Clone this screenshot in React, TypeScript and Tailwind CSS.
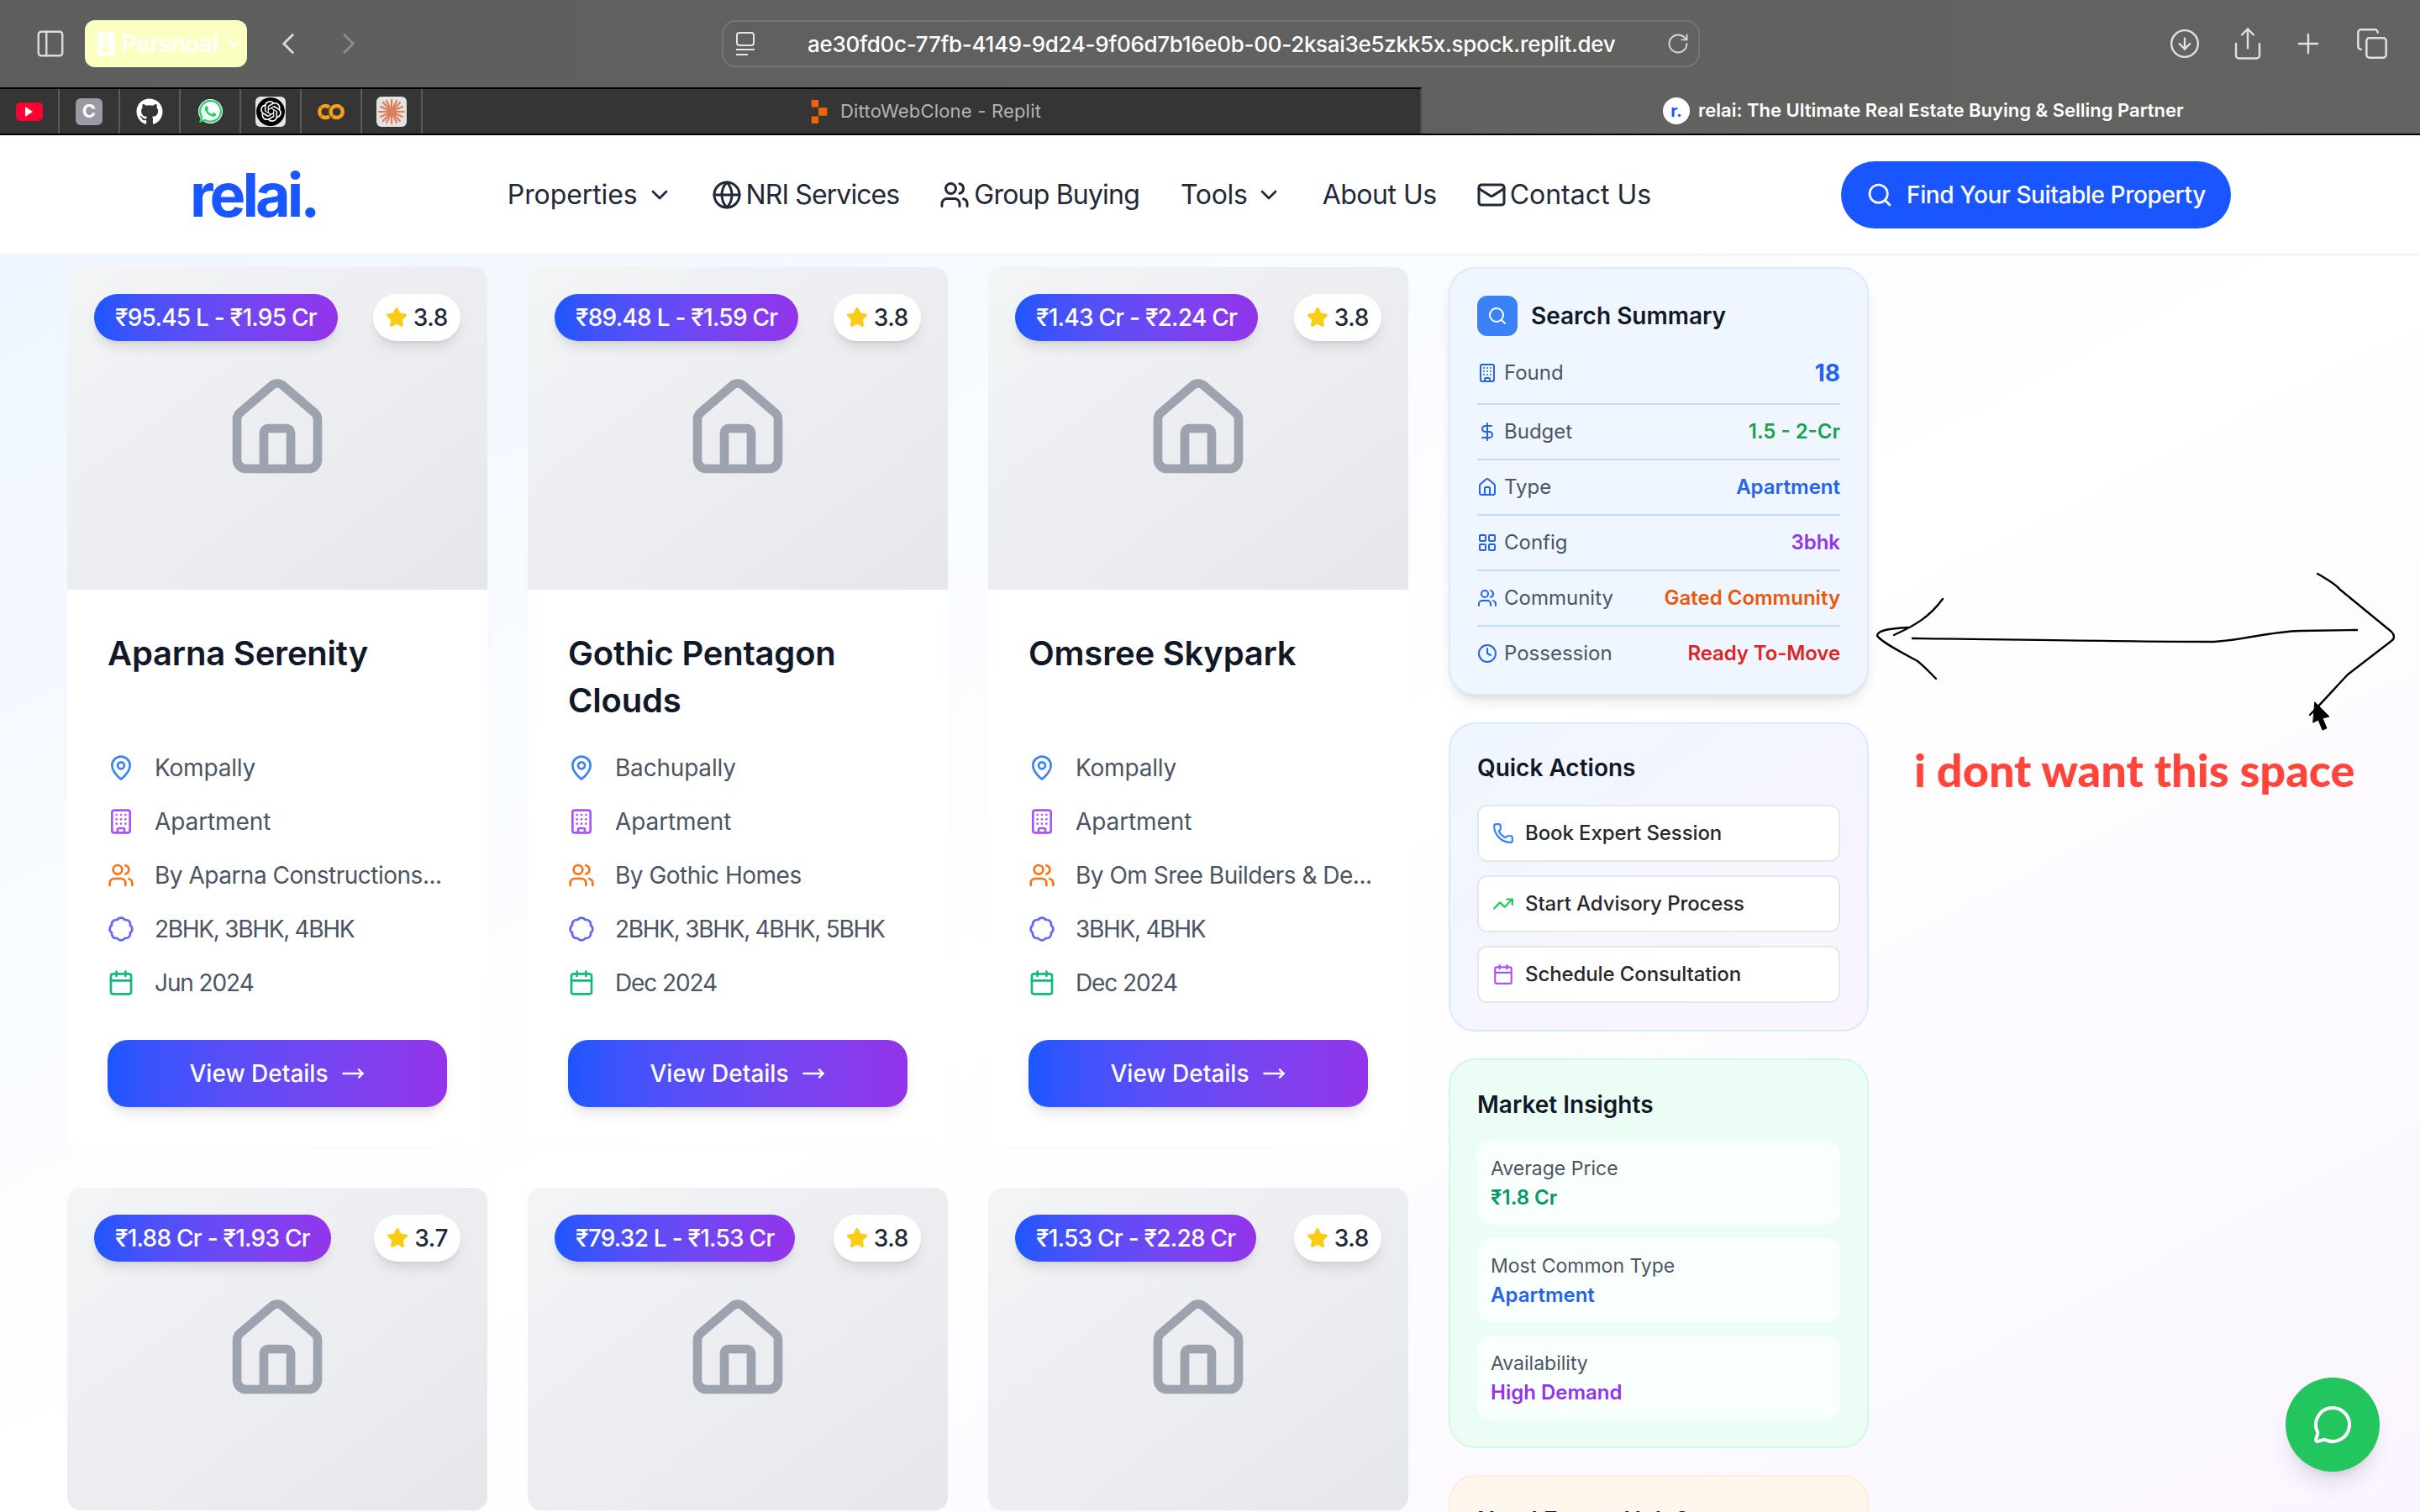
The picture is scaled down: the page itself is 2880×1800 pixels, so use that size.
import {
  Badge,
  Building,
  Calendar,
  ChevronDown,
  ChevronLeft,
  ChevronRight,
  CircleArrowDown,
  Clock,
  Copy,
  DollarSign,
  Globe,
  House,
  LayoutGrid,
  Mail,
  MapPin,
  MessageCircle,
  MoveRight,
  PanelLeft,
  Phone,
  Plus,
  RotateCw,
  Search,
  Share,
  Star,
  TrendingUp,
  Users,
} from "lucide-react";
import { FaGithub, FaWhatsapp } from "react-icons/fa";
import { SiGooglecolab, SiOpenai } from "react-icons/si";

interface Property {
  price: string;
  rating: string;
  name?: string;
  location?: string;
  builder?: string;
  config?: string;
  date?: string;
}

const properties: Property[] = [
  {
    price: "₹95.45 L - ₹1.95 Cr",
    rating: "3.8",
    name: "Aparna Serenity",
    location: "Kompally",
    builder: "By Aparna Constructions...",
    config: "2BHK, 3BHK, 4BHK",
    date: "Jun 2024",
  },
  {
    price: "₹89.48 L - ₹1.59 Cr",
    rating: "3.8",
    name: "Gothic Pentagon Clouds",
    location: "Bachupally",
    builder: "By Gothic Homes",
    config: "2BHK, 3BHK, 4BHK, 5BHK",
    date: "Dec 2024",
  },
  {
    price: "₹1.43 Cr - ₹2.24 Cr",
    rating: "3.8",
    name: "Omsree Skypark",
    location: "Kompally",
    builder: "By Om Sree Builders & De...",
    config: "3BHK, 4BHK",
    date: "Dec 2024",
  },
  { price: "₹1.88 Cr - ₹1.93 Cr", rating: "3.7" },
  { price: "₹79.32 L - ₹1.53 Cr", rating: "3.8" },
  { price: "₹1.53 Cr - ₹2.28 Cr", rating: "3.8" },
];

const summaryRows = [
  { icon: DollarSign, label: "Budget", value: "1.5 - 2-Cr", color: "text-[#16a34a]" },
  { icon: House, label: "Type", value: "Apartment", color: "text-[#2563eb]" },
  { icon: LayoutGrid, label: "Config", value: "3bhk", color: "text-[#9333ea]" },
  { icon: Users, label: "Community", value: "Gated Community", color: "text-[#ea580c]" },
];

const actions = [
  { icon: Phone, label: "Book Expert Session", color: "text-[#3b82f6]" },
  { icon: TrendingUp, label: "Start Advisory Process", color: "text-[#22c55e]" },
  { icon: Calendar, label: "Schedule Consultation", color: "text-[#a855f7]" },
];

const insights = [
  { label: "Average Price", value: "₹1.8 Cr", color: "text-[#059669]" },
  { label: "Most Common Type", value: "Apartment", color: "text-[#2563eb]" },
  { label: "Availability", value: "High Demand", color: "text-[#9333ea]" },
];

function PinnedTabs() {
  return (
    <div className="flex h-full">
      <div className="flex w-[71px] items-center justify-center border-r-2 border-[#5a5a5a]">
        <div className="flex h-[22px] w-[32px] items-center justify-center rounded-[5px] bg-[#ff0033]">
          <div className="h-0 w-0 border-y-[6px] border-l-[9px] border-y-transparent border-l-white" />
        </div>
      </div>
      <div className="flex w-[72px] items-center justify-center border-r-2 border-[#5a5a5a]">
        <div className="flex h-[32px] w-[32px] items-center justify-center rounded-[6px] bg-[#9a9aa5] text-[22px] font-bold text-white">
          C
        </div>
      </div>
      <div className="flex w-[72px] items-center justify-center border-r-2 border-[#5a5a5a]">
        <FaGithub className="h-[32px] w-[32px] text-white" />
      </div>
      <div className="flex w-[72px] items-center justify-center border-r-2 border-[#5a5a5a]">
        <div className="flex h-[29px] w-[29px] items-center justify-center rounded-full bg-white">
          <FaWhatsapp className="h-[31px] w-[31px] shrink-0 text-[#25d366]" />
        </div>
      </div>
      <div className="flex w-[72px] items-center justify-center border-r-2 border-[#5a5a5a]">
        <div className="flex h-[36px] w-[36px] items-center justify-center rounded-[6px] bg-[#e5e5e5]">
          <div className="flex h-[34px] w-[34px] items-center justify-center rounded-full bg-black">
            <SiOpenai className="h-[25px] w-[25px] text-white" />
          </div>
        </div>
      </div>
      <div className="flex w-[72px] items-center justify-center border-r-2 border-[#5a5a5a]">
        <SiGooglecolab className="h-[32px] w-[32px] text-[#f9a01b]" />
      </div>
      <div className="flex w-[72px] items-center justify-center border-r-2 border-[#5a5a5a]">
        <div className="flex h-[36px] w-[36px] items-center justify-center rounded-[6px] bg-[#e5e3e0]">
          <svg viewBox="0 0 36 36" className="h-[36px] w-[36px]" stroke="#dc7f5e" strokeWidth="2.2" strokeLinecap="round">
            <path d="M18 4v28M8 7l20 22M28 7L8 29M3 18h30M5 12l26 12M31 12L5 24M12 5l12 26M24 5L12 31" />
          </svg>
        </div>
      </div>
    </div>
  );
}

function BrowserChrome() {
  return (
    <header className="shrink-0 bg-gradient-to-r from-[#5d5e5e] to-[#636361]">
      <div className="flex h-[104px] items-center">
        <PanelLeft className="ml-[41px] h-[38px] w-[38px] text-[#dcdcdc]" strokeWidth={1.5} />
        <div className="ml-[22px] flex h-[56px] w-[193px] items-center rounded-[12px] bg-[#fbffc2] pl-[15px] text-white">
          <svg viewBox="0 0 20 28" className="h-[28px] w-[20px] fill-white">
            <path d="M2 0h16a2 2 0 0 1 2 2v24a2 2 0 0 1-2 2H2a2 2 0 0 1-2-2V2a2 2 0 0 1 2-2zm6 3v2h4V3zm2 6a3 3 0 1 0 0 6 3 3 0 0 0 0-6zM4 24h12l-3-6H7z" fillRule="evenodd" />
          </svg>
          <span className="ml-[9px] text-[28px] font-semibold tracking-[-0.5px]">Persnoal</span>
          <ChevronDown className="ml-[8px] h-[20px] w-[20px]" strokeWidth={3} />
        </div>
        <ChevronLeft className="ml-[28px] h-[42px] w-[42px] text-[#dcdcdc]" strokeWidth={1.6} />
        <ChevronRight className="ml-[30px] h-[42px] w-[42px] text-[#8c8c8c]" strokeWidth={1.6} />
        <div className="ml-[423px] flex h-[56px] w-[1164px] items-center rounded-[16px] border-2 border-[#757575] pl-[14px] pr-[10px]">
          <svg viewBox="0 0 24 28" className="h-[28px] w-[24px] fill-none stroke-[#e4e4e4]" strokeWidth="2">
            <rect x="2" y="1" width="20" height="15" rx="3" />
            <path d="M1 21h22M1 27h14" />
          </svg>
          <span className="ml-[62px] flex-1 whitespace-nowrap text-[26px] font-medium tracking-[-0.3px] text-white">
            ae30fd0c-77fb-4149-9d24-9f06d7b16e0b-00-2ksai3e5zkk5x.spock.replit.dev
          </span>
          <RotateCw className="h-[28px] w-[28px] text-[#d8d8d8]" strokeWidth={1.6} />
        </div>
        <CircleArrowDown className="ml-[558px] h-[38px] w-[38px] text-[#e0e0e0]" strokeWidth={1.5} />
        <Share className="ml-[35px] h-[42px] w-[42px] text-[#e0e0e0]" strokeWidth={1.4} />
        <Plus className="ml-[32px] h-[38px] w-[38px] text-[#e0e0e0]" strokeWidth={1.6} />
        <Copy className="ml-[37px] h-[40px] w-[40px] text-[#e0e0e0]" strokeWidth={1.5} />
      </div>
      <div className="flex h-[57px] border-b-2 border-black">
        <div className="flex w-[1692px] border-r-2 border-t-2 border-t-black border-r-[#4a4a4a] bg-[#353535]">
          <PinnedTabs />
          <div className="ml-[462px] flex items-center text-[22px] tracking-[0.2px] text-[#b4b4b4]">
            <svg viewBox="0 0 20 30" className="mr-[15px] h-[28px] w-[20px] fill-[#f26207]">
              <path d="M0 0h9v9H0zM9 10h11v10H9zM0 21h9v9H0z" />
            </svg>
            DittoWebClone - Replit
          </div>
        </div>
        <div className="flex flex-1 items-center pl-[287px] text-[22px] font-semibold text-white">
          <div className="mr-[10px] flex h-[32px] w-[32px] items-center justify-center rounded-full bg-white text-[20px] font-bold text-[#1a56ff]">
            r.
          </div>
          relai: The Ultimate Real Estate Buying &amp; Selling Partner
        </div>
      </div>
    </header>
  );
}

function NavBar() {
  return (
    <nav className="flex h-[143px] shrink-0 items-center justify-between border-b-2 border-[#f1f3f6] bg-white pl-[226px] pr-[225px] text-[32px] text-[#1f2937]">
      <div className="w-[152px] text-[72px] font-bold leading-none tracking-[-4px] text-[#1a56ff]">relai.</div>
      <div className="flex items-center tracking-[-0.3px]">
        <span className="tracking-[-0.1px]">Properties</span>
        <ChevronDown className="ml-[10px] h-[32px] w-[32px]" strokeWidth={2} />
        <Globe className="ml-[46px] h-[36px] w-[36px]" strokeWidth={2} />
        <span className="ml-[5px] tracking-[-0.9px]">NRI Services</span>
        <Users className="ml-[48px] h-[36px] w-[36px]" strokeWidth={2} />
        <span className="ml-[5px] tracking-[-0.8px]">Group Buying</span>
        <span className="ml-[49px]">Tools</span>
        <ChevronDown className="ml-[9px] h-[32px] w-[32px]" strokeWidth={2} />
        <span className="ml-[48px] tracking-[-0.5px]">About Us</span>
        <Mail className="ml-[47px] h-[36px] w-[36px]" strokeWidth={2} />
        <span className="ml-[4px] tracking-[0px]">Contact Us</span>
      </div>
      <button className="flex h-[80px] w-[464px] items-center justify-center gap-[16px] rounded-full bg-[#1a56ff] text-[28px] font-medium tracking-[-0.4px] text-white">
        <Search className="h-[32px] w-[32px]" strokeWidth={2} />
        Find Your Suitable Property
      </button>
    </nav>
  );
}

function PropertyCard({ property }: { property: Property }) {
  const details = [
    { icon: MapPin, color: "text-[#3b82f6]", text: property.location, spacing: "tracking-[-0.2px]" },
    { icon: Building, color: "text-[#a855f7]", text: "Apartment", spacing: "tracking-[-0.1px]" },
    { icon: Users, color: "text-[#f97316]", text: property.builder, spacing: "tracking-[-0.5px]" },
    { icon: Badge, color: "text-[#6366f1]", text: property.config, spacing: "tracking-[-1.3px]" },
    { icon: Calendar, color: "text-[#10b981]", text: property.date, spacing: "tracking-[-1.1px]" },
  ];

  return (
    <article className="overflow-hidden rounded-[16px] bg-white shadow-[0_1px_3px_rgba(0,0,0,0.02)]">
      {/* Image placeholder */}
      <div className="relative flex h-[384px] items-center justify-center bg-gradient-to-br from-[#f3f4f6] to-[#e5e7eb]">
        <House className="h-[128px] w-[128px] text-[#9ca3af]" strokeWidth={2} />
        <div className="absolute left-[32px] top-[32px] flex h-[56px] items-center rounded-full bg-gradient-to-r from-[#1a56ff] to-[#9333ea] px-[25px] text-[28px] font-medium tracking-[-0.75px] text-white shadow-lg">
          {property.price}
        </div>
        <div className="absolute right-[32px] top-[32px] flex h-[56px] items-center gap-[7px] rounded-full bg-white px-[15px] text-[28px] font-medium tracking-[-0.4px] text-[#1f2937] shadow-lg">
          <Star className="h-[26px] w-[26px] fill-[#facc15] text-[#facc15]" />
          {property.rating}
        </div>
      </div>

      {property.name && (
        <div className="p-[48px]">
          <h3 className="h-[112px] text-[40px] font-semibold leading-[56px] tracking-[-0.2px] text-[#111827]">
            {property.name}
          </h3>
          <div className="mt-[32px] flex flex-col gap-[24px]">
            {details.map((detail) => (
              <div key={detail.icon.displayName} className={`flex h-[40px] items-center gap-[24px] text-[28px] text-[#4b5563] ${detail.spacing}`}>
                <detail.icon className={`h-[32px] w-[32px] shrink-0 ${detail.color}`} strokeWidth={2} />
                <span className="whitespace-nowrap">{detail.text}</span>
              </div>
            ))}
          </div>
          <button className="mt-[48px] flex h-[80px] w-full items-center justify-center gap-[16px] rounded-[24px] bg-gradient-to-r from-[#1a56ff] to-[#9333ea] text-[28px] font-medium text-white shadow-lg">
            View Details
            <MoveRight className="h-[28px] w-[28px]" strokeWidth={2} />
          </button>
        </div>
      )}
    </article>
  );
}

function SearchSummary() {
  return (
    <section className="rounded-[32px] border-2 border-[#dbeafe] bg-[#eff6ff] px-[32px] pb-[16px] pt-[32px] shadow-lg">
      <div className="flex items-center gap-[16px]">
        <div className="flex h-[48px] w-[48px] items-center justify-center rounded-[12px] bg-[#3b82f6]">
          <Search className="h-[24px] w-[24px] text-white" strokeWidth={2} />
        </div>
        <h2 className="text-[28px] font-semibold text-[#111827]">Search Summary</h2>
      </div>
      <div className="mt-[24px] flex h-[58px] items-start justify-between border-b-2 border-[#bfdbfe]">
        <div className="flex h-[40px] items-center gap-[8px] text-[24px] text-[#4b5563]">
          <Building className="h-[24px] w-[24px] text-[#2563eb]" strokeWidth={2} />
          Found
        </div>
        <span className="text-[28px] font-bold leading-[40px] text-[#2563eb]">18</span>
      </div>
      {summaryRows.map((row) => (
        <div key={row.label} className="flex h-[66px] items-center justify-between border-b-2 border-[#bfdbfe]">
          <div className="flex items-center gap-[8px] text-[24px] text-[#4b5563]">
            <row.icon className="h-[24px] w-[24px] text-[#2563eb]" strokeWidth={2} />
            {row.label}
          </div>
          <span className={`text-[24px] font-semibold ${row.color}`}>{row.value}</span>
        </div>
      ))}
      <div className="flex h-[64px] items-center justify-between">
        <div className="flex items-center gap-[8px] text-[24px] text-[#4b5563]">
          <Clock className="h-[24px] w-[24px] text-[#2563eb]" strokeWidth={2} />
          Possession
        </div>
        <span className="text-[24px] font-semibold tracking-[-0.1px] text-[#dc2626]">Ready To-Move</span>
      </div>
    </section>
  );
}

function QuickActions() {
  return (
    <section className="rounded-[32px] border-2 border-[#dbeafe] bg-gradient-to-br from-[#eff6ff] to-[#faf5ff] p-[32px]">
      <h2 className="text-[28px] font-semibold leading-[40px] text-[#111827]">Quick Actions</h2>
      <div className="mt-[24px] flex flex-col gap-[16px]">
        {actions.map((action) => (
          <button
            key={action.label}
            className="flex h-[68px] items-center gap-[13px] rounded-[12px] border-2 border-[#e5e7eb] bg-white px-[16px] text-[24px] font-medium tracking-[-0.1px] text-[#27272a]"
          >
            <action.icon className={`h-[26px] w-[26px] ${action.color}`} strokeWidth={2} />
            {action.label}
          </button>
        ))}
      </div>
    </section>
  );
}

function MarketInsights() {
  return (
    <section className="rounded-[32px] border-2 border-[#d1fae5] bg-[#ecfdf5] p-[32px]">
      <h2 className="pt-[2px] text-[28px] font-semibold leading-[38px] text-[#111827]">Market Insights</h2>
      <div className="mt-[24px] flex flex-col gap-[16px]">
        {insights.map((item) => (
          <div key={item.label} className="rounded-[16px] bg-white/70 px-[16px] pb-[14px] pt-[16px]">
            <div className="text-[23px] leading-[34px] text-[#4b5563]">{item.label}</div>
            <div className={`text-[24px] font-semibold leading-[36px] ${item.color}`}>{item.value}</div>
          </div>
        ))}
      </div>
    </section>
  );
}

function ExpertHelp() {
  return (
    <section className="rounded-[32px] border-2 border-[#ffedd5] bg-[#fff7ed] p-[32px]">
      <h2 className="text-[28px] font-semibold leading-[40px] text-[#111827]">Need Expert Help?</h2>
    </section>
  );
}

export default function App() {
  return (
    <div className="relative flex h-[1800px] w-[2880px] flex-col overflow-hidden font-['Inter',sans-serif]">
      <BrowserChrome />
      <NavBar />
      <main className="flex-1 overflow-hidden bg-gradient-to-br from-[#eff6ff] via-white to-[#faf5ff] pl-[80px] pt-[14px]">
        <div className="grid w-[2144px] grid-cols-[1596px_500px] items-start gap-[48px]">
          <div className="grid grid-cols-3 content-start gap-[48px]">
            {properties.map((property) => (
              <PropertyCard key={property.price} property={property} />
            ))}
          </div>
          <aside className="flex flex-col gap-[32px]">
            <SearchSummary />
            <QuickActions />
            <MarketInsights />
            <ExpertHelp />
          </aside>
        </div>
      </main>

      {/* Hand drawn annotation on top of the screenshot */}
      <svg viewBox="0 0 2880 1800" className="pointer-events-none absolute left-0 top-0 h-[1800px] w-[2880px] fill-none stroke-black" strokeWidth="2.4" strokeLinecap="round" strokeLinejoin="round">
        <path d="M2276 760C2400 761 2520 764 2634 764C2670 762 2700 752 2738 751L2805 750" />
        <path d="M2312 713C2296 735 2278 745 2254 756" />
        <path d="M2271 747C2250 748 2234 750 2234 757C2240 765 2262 776 2282 787C2292 795 2298 802 2304 808" />
        <path d="M2758 683C2768 689 2778 694 2785 702L2846 752C2850 756 2850 760 2846 763L2794 803C2778 820 2765 835 2749 851" />
        <path d="M2755 836L2772 853L2764 855L2769 867L2764 869L2759 857L2753 860Z" className="fill-black" strokeWidth="1" />
      </svg>
      <div className="absolute left-[2278px] top-[884px] font-['Lato',sans-serif] text-[54px] font-black leading-[66px] text-[#ff453a]">
        i dont want this space
      </div>

      <button className="absolute bottom-[48px] right-[48px] flex h-[112px] w-[112px] items-center justify-center rounded-full bg-[#22c55e] shadow-xl">
        <MessageCircle className="h-[48px] w-[48px] text-white" strokeWidth={2} />
      </button>
    </div>
  );
}
